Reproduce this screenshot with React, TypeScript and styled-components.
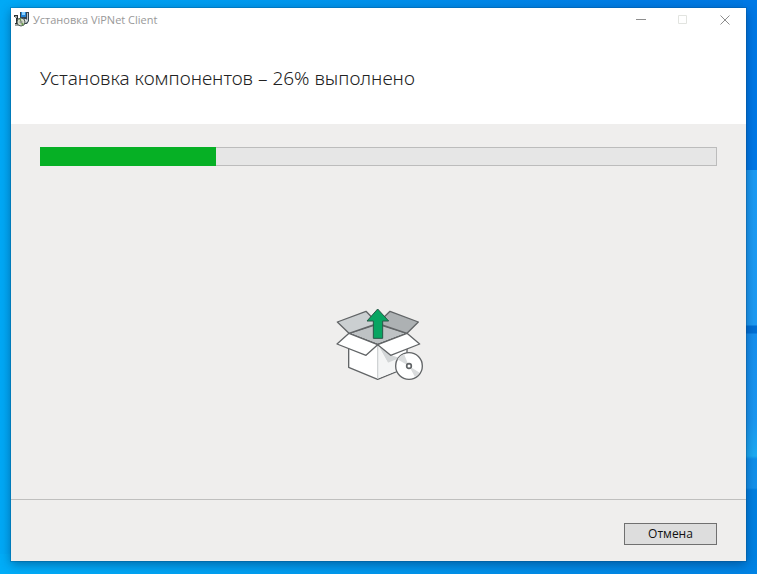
import React from 'react';
import styled, { createGlobalStyle } from 'styled-components';

const GlobalStyle = createGlobalStyle`
  * { box-sizing: border-box; }
  body {
    margin: 0;
    font-family: "Open Sans", "Noto Sans", sans-serif;
    font-size: 11px;
    color: #1b1b1b;
  }
`;

const Desktop = styled.div`
  display: flex;
  min-height: 100vh;
  padding: 8px 11px 13px 11px;
  background:
    linear-gradient(
      #0079e6 0, #0079e8 170px, #1c9cf5 170px, #1e9cf4 325px,
      #0070d6 326px, #0070d6 333px, #1690f0 334px, #1c98f2 420px,
      #1cacf4 456px, #0f90ec 459px, #1592ec 488px, #0080e2 490px, #0083e4 100%
    ) right top / 14px 100% no-repeat,
    linear-gradient(90deg, #00adf8, #009bee 40%, #008ae6 75%, #0083e4) left bottom / 100% 20px no-repeat,
    linear-gradient(90deg, #00a9f6, #0097ee 40%, #007be4 85%, #0078e2);
`;

const Window = styled.main`
  display: flex;
  flex: 1;
  flex-direction: column;
  min-width: 0;
  background: #efeeed;
  box-shadow: 0 0 0 1px rgba(0, 70, 120, 0.25), 0 3px 10px rgba(0, 30, 70, 0.45);
`;

const TitleBar = styled.header`
  display: flex;
  align-items: center;
  height: 23px;
  padding-left: 3px;
  gap: 3px;
  background: #fff;
`;

const WindowTitle = styled.span`
  flex: 1;
  font-size: 11px;
  line-height: 16px;
  color: #999;
`;

const CaptionButton = styled.button`
  display: flex;
  align-items: center;
  justify-content: center;
  width: 38px;
  height: 23px;
  padding: 0;
  border: 0;
  background: transparent;
  color: #8e8e8e;

  &:disabled { color: #e2e4e0; }
`;

const CaptionButtons = styled.div`
  display: flex;
  gap: 4px;
  padding-right: 2px;
`;

const Heading = styled.div`
  display: flex;
  align-items: center;
  height: 93px;
  padding: 0 29px;
  background: #fff;
`;

const Title = styled.h1`
  margin: 0;
  font-family: "Noto Sans", "Open Sans", sans-serif;
  font-size: 19px;
  font-weight: 300;
  line-height: 28px;
  color: #222;
`;

const Content = styled.section`
  display: flex;
  flex: 1;
  flex-direction: column;
  padding: 23px 29px 0;
`;

const Progress = styled.progress`
  display: block;
  width: 100%;
  height: 19px;
  border: 0;
  appearance: none;
  background: #e6e6e6;

  &::-webkit-progress-bar {
    background: #e6e6e6;
    box-shadow: inset 0 0 0 1px #bcbcbc;
  }

  &::-webkit-progress-value { background: #06b025; }
  &::-moz-progress-bar { background: #06b025; }
`;

const Illustration = styled.div`
  display: flex;
  justify-content: center;
  padding-top: 141px;
`;

const Footer = styled.footer`
  display: flex;
  justify-content: flex-end;
  padding: 23px 29px 16px;
  border-top: 1px solid #bfbfbe;
`;

const CancelButton = styled.button`
  width: 93px;
  height: 22px;
  padding: 0;
  border: 1px solid #707070;
  background: #dddddd;
  font-family: inherit;
  font-size: 12px;
  line-height: 20px;
  color: #111;
`;

function InstallerIcon() {
  return (
    <svg width="16" height="17" viewBox="0 0 16 17" aria-hidden="true">
      <path d="M6 1h9v9l-2 3H8L6 10z" fill="#34444e" />
      <path d="M7 1h5v5H7z" fill="#2484d4" />
      <path d="M8 1h3v3H8z" fill="#8bd2ff" />
      <path d="M13 2h1v8h-1z" fill="#b8c2c8" />
      <path d="M7 8h5l2 2-2 2H7z" fill="#d7dde0" />
      <path d="M0 4h4v10H1v-2h1V6H0z" fill="#2d3030" />
      <path d="M1 5h2v2H1zM1 13h3v2H1z" fill="#9da3a0" />
      <circle cx="7" cy="11" r="4" fill="#d7ddcb" stroke="#4c5855" />
      <path d="M7 11L5 8l2-1zM7 11l3 2-2 2z" fill="#6a9c50" />
      <circle cx="7" cy="11" r="1" fill="#fff" stroke="#727b72" />
    </svg>
  );
}

function BoxIllustration() {
  return (
    <svg width="90" height="75" viewBox="27 21 270 225" aria-hidden="true">
      <g stroke="#626567" strokeWidth="4" strokeLinejoin="round">
        <path d="M72 100L158 72l88 28-88 34z" fill="#bec2c4" />
        <path d="M37 66L123 34l35 36-86 30z" fill="#cbcfd1" />
        <path d="M280 66L195 34l-37 36 88 30z" fill="#adb1b3" />
        <path d="M71 101v101l87 36 88-36V101l-88 33z" fill="#fff" />
      </g>
      <path d="M160 138l28 50 58-22v34l-86 35z" fill="#f4f5f5" />
      <path d="M163 142l26 46 35-14-24-8z" fill="#d3d6d7" />
      <path d="M158 136v100" stroke="#d0d3d4" strokeWidth="4" />
      <g stroke="#626567" strokeWidth="4" strokeLinejoin="round">
        <path d="M72 100l86 34-35 32-87-34z" fill="#fff" />
        <path d="M246 100l38 32-87 34-39-32z" fill="#fff" />
        <circle cx="252" cy="198" r="40" fill="#fff" />
      </g>
      <path d="M252 198l-35-20q8-12 20-16zM252 198l32 20q-5 8-14 13z" fill="#dadcdd" />
      <circle cx="252" cy="198" r="7" fill="#fff" stroke="#626567" strokeWidth="5" />
      <path
        d="M158 27l33 36h-18v52h-28V63h-19z"
        fill="#08a562"
        stroke="#285747"
        strokeWidth="3"
        strokeLinejoin="round"
      />
    </svg>
  );
}

export default function App() {
  const percent = 26;

  return (
    <>
      <GlobalStyle />
      <Desktop>
        <Window>
          <TitleBar>
            <InstallerIcon />
            <WindowTitle>Установка ViPNet Client</WindowTitle>
            <CaptionButtons>
              <CaptionButton type="button" aria-label="Свернуть">
                <svg width="10" height="10" viewBox="0 0 10 10">
                  <path d="M0 4.5h10" stroke="currentColor" />
                </svg>
              </CaptionButton>
              <CaptionButton type="button" aria-label="Развернуть" disabled>
                <svg width="10" height="10" viewBox="0 0 10 10">
                  <path d="M.5.5h8v8h-8z" fill="none" stroke="currentColor" />
                </svg>
              </CaptionButton>
              <CaptionButton type="button" aria-label="Закрыть">
                <svg width="10" height="10" viewBox="0 0 10 10">
                  <path d="M.5.5l9 9M9.5.5l-9 9" stroke="currentColor" />
                </svg>
              </CaptionButton>
            </CaptionButtons>
          </TitleBar>
          <Heading>
            <Title id="install-status">Установка компонентов – {percent}% выполнено</Title>
          </Heading>
          <Content>
            <Progress value={percent} max={100} aria-labelledby="install-status" />
            <Illustration>
              <BoxIllustration />
            </Illustration>
          </Content>
          <Footer>
            <CancelButton type="button">Отмена</CancelButton>
          </Footer>
        </Window>
      </Desktop>
    </>
  );
}
